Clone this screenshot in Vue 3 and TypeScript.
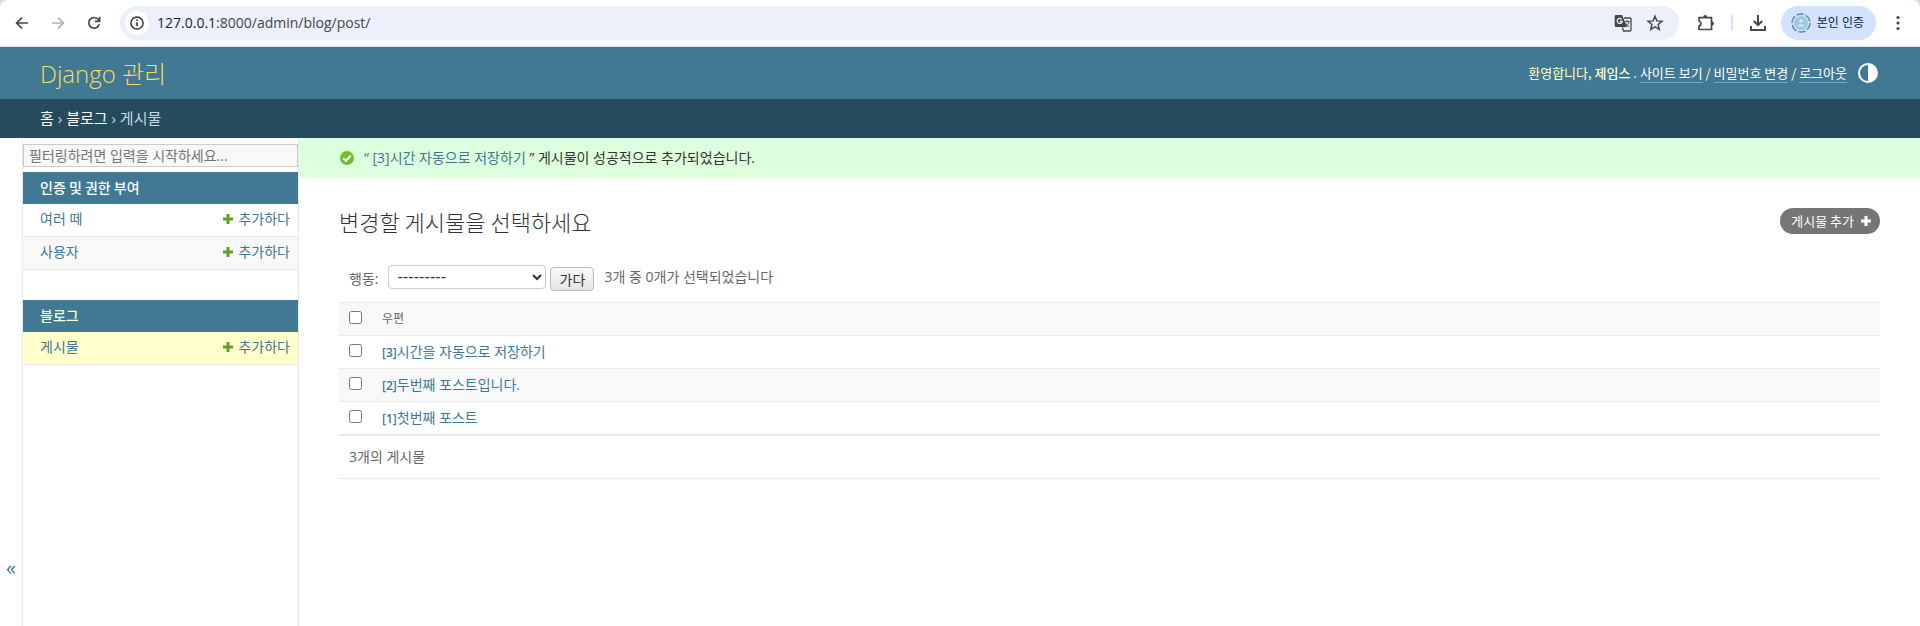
<script setup lang="ts">
import { ref, computed } from 'vue'

interface NavModel { name: string; current?: boolean }
interface NavApp { name: string; current?: boolean; models: NavModel[] }
interface Post { id: number; tag: string; title: string }

const apps: NavApp[] = [
  { name: '인증 및 권한 부여', models: [{ name: '여러 떼' }, { name: '사용자' }] },
  { name: '블로그', current: true, models: [{ name: '게시물', current: true }] },
]

const posts: Post[] = [
  { id: 3, tag: '[3]', title: '시간을 자동으로 저장하기' },
  { id: 2, tag: '[2]', title: '두번째 포스트입니다.' },
  { id: 1, tag: '[1]', title: '첫번째 포스트' },
]

const host = '127.0.0.1'
const path = ':8000/admin/blog/post/'
const filter = ref('')
const action = ref('')
const selected = ref<number[]>([])
const allSelected = computed({
  get: () => selected.value.length === posts.length,
  set: (on: boolean) => { selected.value = on ? posts.map((p) => p.id) : [] },
})
</script>

<template>
  <div class="window">
    <div class="chrome">
      <div class="toolbar">
        <button class="tool" type="button" aria-label="뒤로">
          <svg width="16" height="16" viewBox="0 0 16 16" fill="none" stroke="#474747" stroke-width="1.7"><path d="M14 8H3M8 2.6 2.6 8 8 13.400" /></svg>
        </button>
        <button class="tool" type="button" aria-label="앞으로">
          <svg width="16" height="16" viewBox="0 0 16 16" fill="none" stroke="#b0b0b0" stroke-width="1.7"><path d="M2 8h11M8 2.600 13.400 8 8 13.400" /></svg>
        </button>
        <button class="tool" type="button" aria-label="새로고침">
          <svg width="16" height="16" viewBox="0 0 16 16" fill="none" stroke="#474747" stroke-width="1.7"><path d="M13.200 9.200A5.300 5.300 0 1 1 12.300 4.600L13.500 6M13.600 1.800V6.300H9" /></svg>
        </button>
        <div class="omnibox">
          <button class="site-info" type="button" aria-label="사이트 정보">
            <svg width="16" height="16" viewBox="0 0 16 16"><circle cx="8" cy="8" r="6.100" fill="none" stroke="#333" stroke-width="1.500" /><path d="M7.200 7.200h1.600v4H7.200zM7.200 4.600h1.600v1.500H7.200z" fill="#333" /></svg>
          </button>
          <span class="address"><span class="host">{{ host }}</span>{{ path }}</span>
          <button class="plain" type="button" aria-label="번역">
            <svg width="18" height="18" viewBox="0 0 18 18"><path d="M2 1h6.200l1.300 3.300L12.800 13H2a1.300 1.300 0 0 1-1.300-1.300V2.300A1.300 1.300 0 0 1 2 1z" fill="#474747" /><path d="M7.600 5.300a2.500 2.500 0 1 0 .6 2H5.900" fill="none" stroke="#fff" stroke-width="1.200" /><path d="M10 4h6a1 1 0 0 1 1 1v11a1 1 0 0 1-1 1H9.600L8.400 13.400" fill="none" stroke="#474747" stroke-width="1.300" /><path d="M10.500 7.600h5.200M13 6.200v1.400M15 7.600c-.4 2-1.600 3.800-3.500 5.200M11.600 9c.7 1.700 1.800 3 3.500 4" fill="none" stroke="#474747" stroke-width="1" /></svg>
          </button>
          <button class="plain" type="button" aria-label="북마크">
            <svg width="18" height="18" viewBox="0 0 18 18"><path d="M9 2.300 10.900 6.900 15.900 7.300 12.100 10.500 13.300 15.400 9 12.800 4.700 15.400 5.900 10.500 2.100 7.300 7.100 6.900z" fill="none" stroke="#474747" stroke-width="1.500" /></svg>
          </button>
        </div>
        <button class="plain" type="button" aria-label="확장 프로그램">
          <svg width="18" height="18" viewBox="0 0 18 18"><path d="M2 3.600h12.500V15.500H2V12c2.600-.5 2.600-4.400 0-5z" fill="none" stroke="#474747" stroke-width="1.700" stroke-linejoin="round" /><path d="M6.200 3a2 2 0 0 1 4 0zM15 7.500a2 2 0 0 1 0 4z" fill="#474747" /></svg>
        </button>
        <span class="divider"></span>
        <button class="plain" type="button" aria-label="다운로드">
          <svg width="18" height="18" viewBox="0 0 18 18" fill="none" stroke="#474747" stroke-width="2"><path d="M9 1v9.500M4.800 7 9 11.200 13.200 7M2 12v4h14v-4" /></svg>
        </button>
        <button class="profile" type="button">
          <svg width="20" height="20" viewBox="0 0 20 20"><circle cx="10" cy="10" r="9" fill="none" stroke="#5f7fb4" stroke-width="1.300" stroke-dasharray="7.400 2" /><circle cx="10" cy="10" r="7" fill="#9bcbd6" /><circle cx="10" cy="8" r="1.900" fill="#d3e3fd" /><path d="M6.500 13.500c0-3 7-3 7 0z" fill="#d3e3fd" /></svg>
          <span>본인 인증</span>
        </button>
        <button class="tool" type="button" aria-label="메뉴">
          <svg width="16" height="16" viewBox="0 0 16 16" fill="#474747"><circle cx="8" cy="2.500" r="1.600" /><circle cx="8" cy="8" r="1.600" /><circle cx="8" cy="13.500" r="1.600" /></svg>
        </button>
      </div>
    </div>

    <header class="header">
      <a class="brand" href="#">Django 관리</a>
      <div class="user-tools">
        <span>환영합니다, <strong>제임스</strong> . <a href="#">사이트 보기</a> / <a href="#">비밀번호 변경</a> / <a href="#">로그아웃</a></span>
        <button class="plain" type="button" aria-label="테마 전환">
          <svg width="20" height="20" viewBox="0 0 20 20"><circle cx="10" cy="10" r="9" fill="none" stroke="#fff" stroke-width="2" /><path d="M10 1a9 9 0 0 1 0 18z" fill="#fff" /></svg>
        </button>
      </div>
    </header>

    <nav class="breadcrumbs"><a href="#">홈</a> › <a href="#">블로그</a> › 게시물</nav>

    <div class="main">
      <button class="toggle" type="button" aria-label="사이드바 접기">«</button>
      <nav class="sidebar">
        <input v-model="filter" class="filter" type="search" aria-label="탐색 항목 필터" placeholder="필터링하려면 입력을 시작하세요...">
        <table v-for="app in apps" :key="app.name" class="app">
          <caption><a href="#" :class="{ current: app.current }">{{ app.name }}</a></caption>
          <tbody>
            <tr v-for="m in app.models" :key="m.name" :class="{ current: m.current }">
              <th scope="row"><a href="#">{{ m.name }}</a></th>
              <td>
                <a class="add" href="#">
                  <svg width="12" height="12" viewBox="0 0 12 12"><path d="M4.500 1h3v3.500H11v3H7.500V11h-3V7.500H1v-3h3.500z" fill="#5fa225" /></svg>
                  <span>추가하다</span>
                </a>
              </td>
            </tr>
          </tbody>
        </table>
      </nav>

      <main class="content">
        <p class="message">
          <svg width="14" height="14" viewBox="0 0 14 14"><circle cx="7" cy="7" r="7" fill="#70bf2b" /><path d="M3.300 7.200 6 9.800 10.700 4.800" fill="none" stroke="#fff" stroke-width="2" /></svg>
          <span><a href="#">“ [3]시간 자동으로 저장하기</a> ” 게시물이 성공적으로 추가되었습니다.</span>
        </p>
        <div class="body">
          <div class="title">
            <h1>변경할 게시물을 선택하세요</h1>
            <a class="add-post" href="#">
              <span>게시물 추가</span>
              <svg width="12" height="12" viewBox="0 0 12 12"><path d="M4.500 1h3v3.500H11v3H7.500V11h-3V7.500H1v-3h3.500z" fill="#fff" /></svg>
            </a>
          </div>
          <form class="changelist" @submit.prevent>
            <div class="actions">
              <label for="action">행동:</label>
              <select id="action" v-model="action"><option value="">---------</option></select>
              <button class="go" type="submit">가다</button>
              <span class="counter">3개 중 {{ selected.length }}개가 선택되었습니다</span>
            </div>
            <table class="results">
              <thead>
                <tr>
                  <th class="check"><input v-model="allSelected" type="checkbox" aria-label="모두 선택"></th>
                  <th scope="col">우편</th>
                </tr>
              </thead>
              <tbody>
                <tr v-for="p in posts" :key="p.id">
                  <td class="check"><input v-model="selected" type="checkbox" :value="p.id" :aria-label="p.title"></td>
                  <th scope="row"><a href="#"><b>{{ p.tag }}</b>{{ p.title }}</a></th>
                </tr>
              </tbody>
            </table>
            <p class="paginator">3개의 게시물</p>
          </form>
        </div>
      </main>
    </div>
  </div>
</template>

<style>
body { margin: 0; background: #fff; }
</style>

<style scoped>
.window { display: flex; flex-direction: column; min-height: 100vh; font: 14px/20px "Open Sans", "Noto Sans CJK KR", sans-serif; color: #666; }
.window * { box-sizing: border-box; }
a { color: #417893; text-decoration: none; }
button, input, select { font: inherit; }
svg { display: block; flex: none; }
.tool, .plain, .site-info { display: grid; place-items: center; border: 0; padding: 0; background: none; }
.tool { width: 20px; height: 20px; }
.user-tools, .app caption, .add-post, h1 { font-family: "Noto Sans CJK KR", sans-serif; }

.chrome { background: #d8dee6; border-bottom: 1px solid #dcdfe3; }
.toolbar { display: flex; align-items: center; gap: 16px; height: 46px; padding: 6px 12px; background: #fff; border-radius: 8px 8px 0 0; }
.omnibox { flex: 1; display: flex; align-items: center; gap: 14px; height: 34px; margin-right: 2px; padding: 0 15px 0 5px; border-radius: 17px; background: #ecf0fa; }
.site-info { width: 24px; height: 24px; border-radius: 50%; background: #fff; }
.address { flex: 1; margin-left: -6px; color: #474747; }
.host { color: #1f1f1f; }
.divider { width: 2px; height: 16px; background: #d3e3fd; }
.profile { display: flex; align-items: center; gap: 6px; height: 34px; margin-right: -4px; margin-left: -2px; padding: 0 12px 0 10px; border: 0; border-radius: 17px; background: #d3e3fd; color: #041e49; font-size: 12px; }

.header { display: flex; align-items: center; justify-content: space-between; height: 52px; padding: 0 42px 0 40px; background: #417893; color: #ffc; }
.brand { padding-top: 2px; color: #f5dd5d; font-size: 24px; line-height: 32px; font-weight: 300; }
.user-tools { display: flex; align-items: center; gap: 11px; font-size: 13px; line-height: 18px; }
.user-tools strong { font-weight: 500; }
.user-tools a { color: #fff; border-bottom: 1px solid #7fa4b6; }
.breadcrumbs { padding: 9px 40px 10px; background: #264b5d; color: #c4dce8; font-size: 15px; }
.breadcrumbs a { color: #fff; }

.main { flex: 1; display: flex; }
.toggle { display: flex; align-items: flex-end; justify-content: center; width: 23px; padding: 0 0 46px; border: 0; border-right: 1px solid #e8e8e8; background: #fff; color: #417893; font-size: 20px; line-height: 24px; }
.sidebar { width: 276px; padding-top: 6px; border-right: 1px solid #e8e8e8; }
.filter { display: block; width: 100%; height: 23px; margin-bottom: 5px; padding: 0 5px 1px; border: 1px solid #ccc; border-radius: 0; background: #f8f8f8; color: #333; appearance: none; }
.filter::placeholder { color: #757575; opacity: 1; }
.app { width: 100%; margin-bottom: 30px; border-collapse: separate; border-spacing: 0; }
.app caption { padding: 5px 17px 7px; background: #417893; text-align: left; font-weight: 500; }
.app caption a { color: #fff; }
.app caption a.current { color: #ffc; }
.app th, .app td { height: 33px; padding: 0 8px 2px 17px; border-bottom: 1px solid #e8e8e8; text-align: left; font-weight: 400; }
.app tr:nth-child(even) { background: #f8f8f8; }
.app tr.current { background: #ffc; }
.add { display: flex; align-items: center; justify-content: flex-end; gap: 4px; }

.content { flex: 1; min-width: 0; }
.message { display: flex; align-items: center; gap: 10px; height: 40px; margin: 0; padding: 0 41px; background: #dfd; color: #333; }
.body { padding: 30px 40px; }
.title { display: flex; align-items: flex-start; justify-content: space-between; margin-bottom: 29px; }
h1 { margin: 0; color: #333; font-size: 22px; line-height: 26px; font-weight: 300; }
.add-post { display: flex; align-items: center; gap: 6px; height: 26px; margin-bottom: 2px; padding: 0 8px 0 11px; border-radius: 13px; background: #757575; color: #fff; font-size: 13px; }
.actions { display: flex; align-items: center; height: 37px; padding: 0 10px 13px; }
.actions label { padding-top: 4px; }
.actions select { width: 158px; height: 24px; margin: 0 4px 0 10px; padding: 0 4px; border: 1px solid #ccc; border-radius: 4px; background: #fff; color: #333; font: 15px/20px "DejaVu Sans", sans-serif; }
.go { width: 44px; height: 24px; margin-top: 4px; padding: 2px 0 0; border: 1px solid #bbb; border-radius: 4px; background: linear-gradient(#fafafa, #e4e4e4); color: #333; line-height: 20px; }
.counter { margin-left: 10px; }
.results { width: 100%; border-collapse: separate; border-spacing: 0; }
.results th, .results td { height: 33px; padding: 0 10px; border-top: 1px solid #e8e8e8; text-align: left; font-weight: 400; }
.results thead th { font-size: 12px; }
.results thead tr, .results tbody tr:nth-child(even) { background: #f8f8f8; }
.results .check { width: 32px; }
.check input { display: block; width: 13px; height: 13px; margin: 0 0 4px; }
.results b { font-weight: 600; font-size: 12px; }
.paginator { margin: 0; padding: 11px 10px; border-top: 2px solid #e8e8e8; border-bottom: 1px solid #e8e8e8; }
</style>
